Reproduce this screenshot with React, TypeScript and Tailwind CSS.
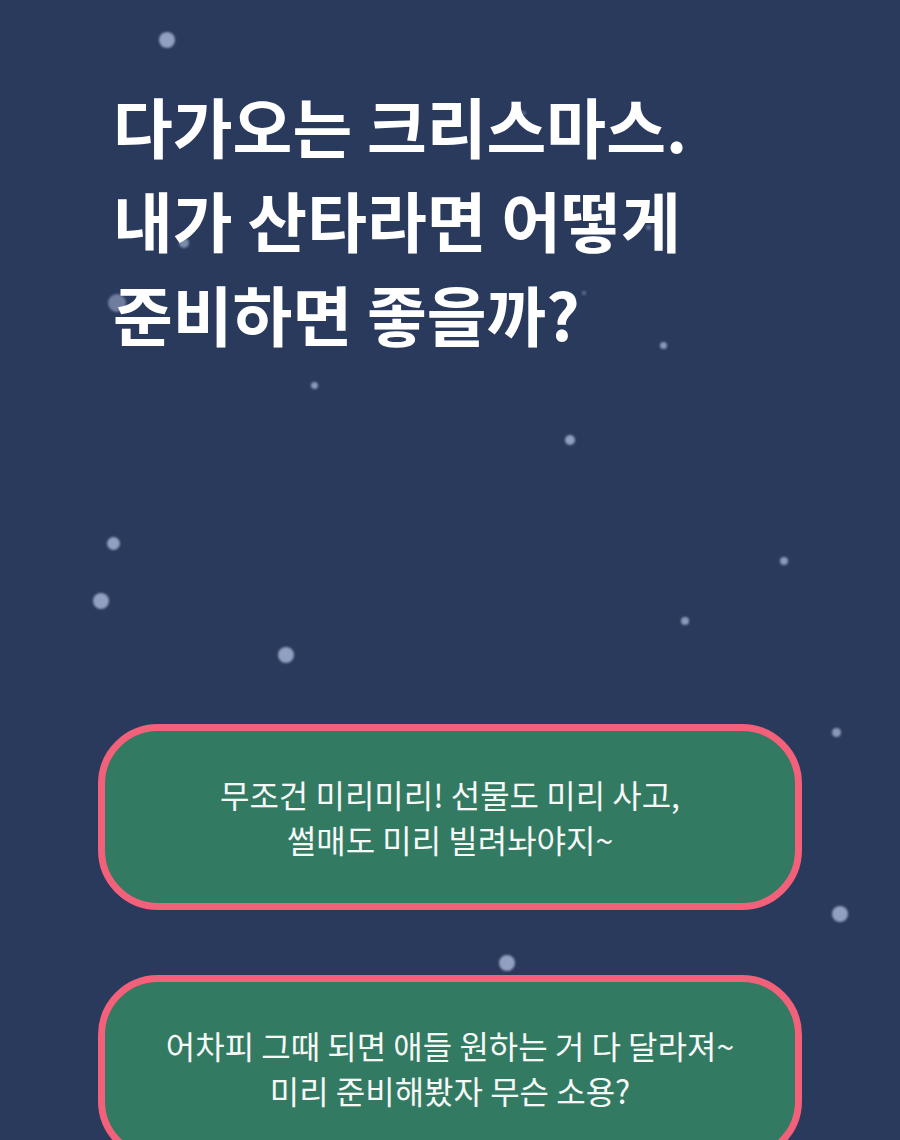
import React from 'react';

type Flake = { x: number; y: number; size: number; opacity: number };

// falling snow, placed on the backdrop
const flakes: Flake[] = [
  { x: 167, y: 40, size: 16, opacity: 0.75 },
  { x: 184, y: 243, size: 10, opacity: 0.6 },
  { x: 117, y: 303, size: 18, opacity: 0.5 },
  { x: 524, y: 113, size: 4, opacity: 0.4 },
  { x: 648, y: 227, size: 5, opacity: 0.4 },
  { x: 584, y: 293, size: 4, opacity: 0.4 },
  { x: 663, y: 345, size: 7, opacity: 0.7 },
  { x: 314, y: 385, size: 7, opacity: 0.7 },
  { x: 570, y: 440, size: 10, opacity: 0.75 },
  { x: 113, y: 543, size: 13, opacity: 0.75 },
  { x: 101, y: 601, size: 16, opacity: 0.75 },
  { x: 286, y: 655, size: 16, opacity: 0.75 },
  { x: 784, y: 561, size: 8, opacity: 0.7 },
  { x: 685, y: 621, size: 8, opacity: 0.7 },
  { x: 836, y: 732, size: 9, opacity: 0.7 },
  { x: 840, y: 914, size: 16, opacity: 0.75 },
  { x: 507, y: 963, size: 16, opacity: 0.75 },
];

const answers = [
  ['무조건 미리미리! 선물도 미리 사고,', '썰매도 미리 빌려놔야지~'],
  ['어차피 그때 되면 애들 원하는 거 다 달라져~', '미리 준비해봤자 무슨 소용?'],
];

function Snow() {
  return (
    <div className="pointer-events-none absolute inset-0">
      {flakes.map((f, i) => (
        <span
          key={i}
          className="absolute rounded-full bg-[#b4c2e2] blur-[1px]"
          style={{
            left: f.x - f.size / 2,
            top: f.y - f.size / 2,
            width: f.size,
            height: f.size,
            opacity: f.opacity,
          }}
        />
      ))}
    </div>
  );
}

export default function App() {
  return (
    <div
      className="relative min-h-[1140px] w-full overflow-hidden bg-[#293a5c]"
      style={{ fontFamily: '"Noto Sans CJK KR", "Noto Sans", sans-serif' }}
    >
      <Snow />

      <div className="relative">
        {/* Question */}
        <h1 className="pt-[78px] pl-[113px] text-[65px] font-bold leading-[94px] text-white">
          다가오는 크리스마스.
          <br />
          내가 산타라면 어떻게
          <br />
          준비하면 좋을까?
        </h1>

        {/* Answer choices */}
        <div className="mt-[364px] flex flex-col gap-[65px] px-[98px]">
          {answers.map((lines, i) => (
            <button
              key={i}
              type="button"
              className="flex h-[186px] w-full flex-col items-center justify-center rounded-[60px] border-[7px] border-[#f2607a] bg-[#337a63] text-[32px] leading-[45px] text-[#f6f8f6]"
            >
              {lines.map(line => (
                <span key={line}>{line}</span>
              ))}
            </button>
          ))}
        </div>
      </div>
    </div>
  );
}
